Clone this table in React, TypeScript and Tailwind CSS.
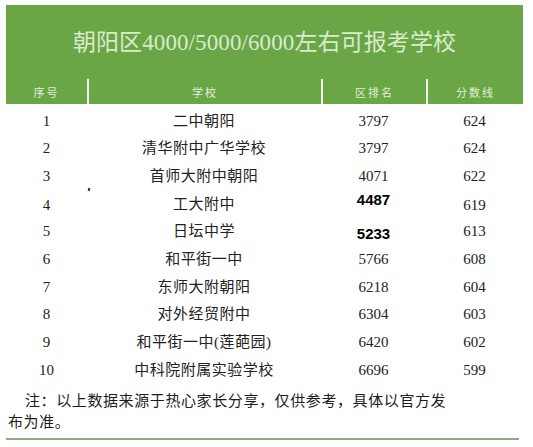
const rows = [
  { no: '1', name: '二中朝阳', rank: '3797', score: '624' },
  { no: '2', name: '清华附中广华学校', rank: '3797', score: '624' },
  { no: '3', name: '首师大附中朝阳', rank: '4071', score: '622' },
  { no: '4', name: '工大附中', rank: '4487', score: '619', bold: 'up' },
  { no: '5', name: '日坛中学', rank: '5233', score: '613', bold: 'down' },
  { no: '6', name: '和平街一中', rank: '5766', score: '608' },
  { no: '7', name: '东师大附朝阳', rank: '6218', score: '604' },
  { no: '8', name: '对外经贸附中', rank: '6304', score: '603' },
  { no: '9', name: '和平街一中(莲葩园)', rank: '6420', score: '602' },
  { no: '10', name: '中科院附属实验学校', rank: '6696', score: '599' },
];

const cols = 'grid grid-cols-[81px_234px_105px_97px]';

export default function App() {
  return (
    <div className="relative w-[533px] h-[447px] bg-white overflow-hidden text-[#222] font-['Liberation_Serif','Noto_Sans_CJK_SC',serif]">
      {/* green title block */}
      <div className="ml-[6px] mt-[5px] w-[517px] bg-[#6aa646]">
        <div className="h-[74px] flex items-center justify-center pt-[2px] text-[23px] text-[#d9ebcb] tracking-[0.1px]">
          朝阳区4000/5000/6000左右可报考学校
        </div>
        <div className={`${cols} h-[25px] text-[11px] text-[#e3efd8] tracking-[2px]`}>
          <div className="flex items-center justify-center pt-[3px]">序号</div>
          <div className="flex items-center justify-center pt-[3px] border-l-2 border-white/90">学校</div>
          <div className="flex items-center justify-center pt-[3px] border-l-2 border-white/90">区排名</div>
          <div className="flex items-center justify-center pt-[3px] border-l-2 border-white/90">分数线</div>
        </div>
      </div>

      {/* rows */}
      <div className="ml-[6px] w-[517px] pt-[3px]">
        {rows.map((r) => (
          <div key={r.no} className={`${cols} h-[27.7px] text-[15px] items-center text-center`}>
            <div className={r.bold === 'up' ? 'translate-y-[1px]' : ''}>{r.no}</div>
            <div className="tracking-[0.5px]">{r.name}</div>
            <div
              className={
                r.bold === 'up'
                  ? "font-['Liberation_Sans',sans-serif] font-bold text-black -translate-y-[4px]"
                  : r.bold === 'down'
                    ? "font-['Liberation_Sans',sans-serif] font-bold text-black translate-y-[3px]"
                    : ''
              }
            >
              {r.rank}
            </div>
            <div className={r.bold === 'up' ? 'translate-y-[1px]' : ''}>{r.score}</div>
          </div>
        ))}
      </div>

      {/* stray mark */}
      <span className="absolute left-[88px] top-[188px] w-[2px] h-[3px] bg-[#333] rotate-12" />

      {/* note */}
      <div className="mt-[5px] pl-[8px] text-[15px] leading-[21px] text-[#1c1c1c] font-['Noto_Sans_CJK_SC',sans-serif] tracking-[0.6px]">
        <div className="pl-[17px]">注：以上数据来源于热心家长分享，仅供参考，具体以官方发</div>
        <div>布为准。</div>
      </div>

      <div className="absolute left-[6px] top-[438px] w-[513px] h-[2px] bg-[#8dab7e]" />
    </div>
  );
}
